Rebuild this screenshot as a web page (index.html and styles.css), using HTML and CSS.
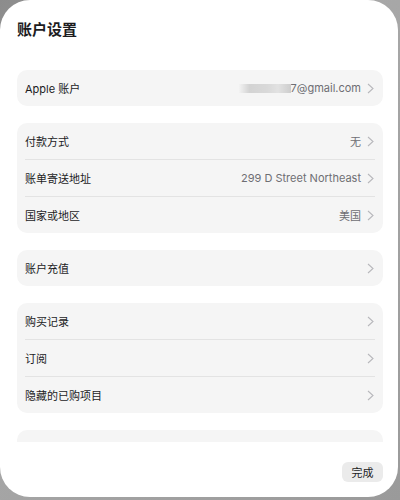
FILE: index.html
```
<!DOCTYPE html>
<html>
<head>
	<title>账户设置</title>
	<link rel="stylesheet" href="styles.css">
</head>
<body>
	<div class="sheet">
		<div class="title">账户设置</div>
		<div class="content">
			<div class="group">
				<div class="row">
					<span class="label">Apple 账户</span>
					<span class="value"><span class="blur"></span>7@gmail.com</span>
					<svg class="chev" width="7" height="11" viewBox="0 0 7 11"><polyline points="1,1 6,5.5 1,10" /></svg>
				</div>
			</div>
			<div class="group">
				<div class="row">
					<span class="label">付款方式</span>
					<span class="value">无</span>
					<svg class="chev" width="7" height="11" viewBox="0 0 7 11"><polyline points="1,1 6,5.5 1,10" /></svg>
				</div>
				<div class="row">
					<span class="label">账单寄送地址</span>
					<span class="value">299 D Street Northeast</span>
					<svg class="chev" width="7" height="11" viewBox="0 0 7 11"><polyline points="1,1 6,5.5 1,10" /></svg>
				</div>
				<div class="row">
					<span class="label">国家或地区</span>
					<span class="value">美国</span>
					<svg class="chev" width="7" height="11" viewBox="0 0 7 11"><polyline points="1,1 6,5.5 1,10" /></svg>
				</div>
			</div>
			<div class="group">
				<div class="row">
					<span class="label">账户充值</span>
					<span class="value"></span>
					<svg class="chev" width="7" height="11" viewBox="0 0 7 11"><polyline points="1,1 6,5.5 1,10" /></svg>
				</div>
			</div>
			<div class="group">
				<div class="row">
					<span class="label">购买记录</span>
					<span class="value"></span>
					<svg class="chev" width="7" height="11" viewBox="0 0 7 11"><polyline points="1,1 6,5.5 1,10" /></svg>
				</div>
				<div class="row">
					<span class="label">订阅</span>
					<span class="value"></span>
					<svg class="chev" width="7" height="11" viewBox="0 0 7 11"><polyline points="1,1 6,5.5 1,10" /></svg>
				</div>
				<div class="row">
					<span class="label">隐藏的已购项目</span>
					<span class="value"></span>
					<svg class="chev" width="7" height="11" viewBox="0 0 7 11"><polyline points="1,1 6,5.5 1,10" /></svg>
				</div>
			</div>
			<div class="group">
				<div class="row">
					<span class="label">&nbsp;</span>
				</div>
			</div>
		</div>
		<div class="footer">
			<button class="done">完成</button>
		</div>
	</div>
</body>
</html>
```
FILE: styles.css
```
html, body {
	margin: 0;
	height: 100%;
}
body {
	background: linear-gradient(135deg, #8c8c8c, #a8a8a8 40%, #9a9a9a);
	font-family: Inter, "Noto Sans CJK SC", sans-serif;
	color: #1c1c1e;
}
.sheet {
	width: 398px;
	height: 497px;
	background: #ffffff;
	border-radius: 30px;
	display: flex;
	flex-direction: column;
	overflow: hidden;
}
.title {
	font-size: 15px;
	font-weight: 700;
	padding: 20px 17px 0 17px;
	height: 33px;
	line-height: 20px;
}
.content {
	flex: 1;
	overflow: hidden;
	padding: 17px 15px 0 17px;
	display: flex;
	flex-direction: column;
	gap: 17px;
}
.group {
	background: #f5f5f5;
	border-radius: 10px;
	padding: 0 8px;
	flex-shrink: 0;
}
.row {
	height: 36px;
	display: flex;
	align-items: center;
	font-size: 11px;
}
.row + .row {
	border-top: 1px solid #e3e3e3;
}
.label {
	flex: 1;
}
.value {
	color: #6e6e73;
	display: flex;
	align-items: center;
}
.blur {
	display: inline-block;
	width: 52px;
	height: 9px;
	background: linear-gradient(to right, #f3f3f3, #d3d3d3 20%, #d9d9d9 55%, #e2e2e2 75%, #cdcdcd);
	filter: blur(0.6px);
}
.chev {
	margin-left: 6px;
	margin-right: 1px;
}
.chev polyline {
	fill: none;
	stroke: #b8b8bc;
	stroke-width: 1.1;
}
.footer {
	height: 55px;
	display: flex;
	justify-content: flex-end;
	align-items: flex-start;
	padding: 20px 15px 0 0;
	box-sizing: border-box;
}
.done {
	border: none;
	background: #ebebeb;
	border-radius: 6px;
	width: 41px;
	height: 20px;
	font-family: Inter, "Noto Sans CJK SC", sans-serif;
	font-size: 11px;
	color: #1c1c1e;
	padding: 0;
}
```
